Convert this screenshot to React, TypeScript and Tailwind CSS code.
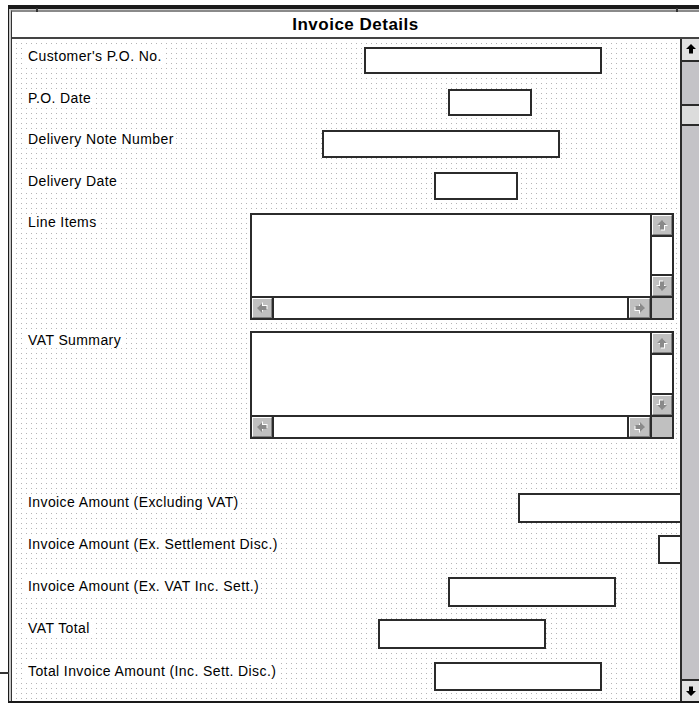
import React from "react";

type Dir = "up" | "down" | "left" | "right";

const turn: Record<Dir, string> = {
  up: "rotate-0",
  down: "rotate-180",
  left: "-rotate-90",
  right: "rotate-90",
};

const Arrow = ({ dir, dark }: { dir: Dir; dark?: boolean }) => (
  <svg width="12" height="12" viewBox="0 0 12 12" className={turn[dir]}>
    {!dark && <polygon points="7,2 12,7 9,7 9,11.5 5,11.5 5,7 2,7" fill="#ffffff" />}
    <polygon points="6,1 11,6 8,6 8,10.5 4,10.5 4,6 1,6" fill={dark ? "#000000" : "#8a8a8a"} />
  </svg>
);

const ScrollBtn = ({ dir, cls }: { dir: Dir; cls: string }) => (
  <div className={`${cls} shrink-0 border-[#2b2b2b]`}>
    <div className="h-full w-full flex items-center justify-center bg-[#c0c0c0] border-t border-l border-t-white border-l-white border-b border-r border-b-[#808080] border-r-[#808080]">
      <Arrow dir={dir} />
    </div>
  </div>
);

const TextBox = ({ cls }: { cls: string }) => (
  <div className={`${cls} shrink-0 border-2 border-[#2b2b2b] bg-white`} />
);

const ListBox = ({ cls }: { cls: string }) => (
  <div className={`${cls} shrink-0 border-2 border-[#2b2b2b] bg-white flex flex-col`}>
    <div className="flex flex-1 min-h-0">
      <div className="flex-1" />
      <div className="w-[22px] border-l-2 border-[#2b2b2b] flex flex-col">
        <ScrollBtn dir="up" cls="h-[22px] border-b-2" />
        <div className="flex-1 bg-white" />
        <ScrollBtn dir="down" cls="h-[22px] border-t-2" />
      </div>
    </div>
    <div className="h-[22px] border-t-2 border-[#2b2b2b] flex">
      <ScrollBtn dir="left" cls="w-[22px] border-r-2" />
      <div className="flex-1 bg-white" />
      <ScrollBtn dir="right" cls="w-[23px] border-l-2" />
      <div className="w-[22px] border-l-2 border-[#2b2b2b] bg-[#c0c0c0]" />
    </div>
  </div>
);

const fields = [
  { label: "Customer's P.O. No.", row: "mt-[8px]", col: "w-[352px]", box: "w-[238px] h-[27px]" },
  { label: "P.O. Date", row: "mt-[15px]", col: "w-[436px]", box: "w-[84px] h-[27px]" },
  { label: "Delivery Note Number", row: "mt-[14px]", col: "w-[310px]", box: "w-[238px] h-[28px]" },
  { label: "Delivery Date", row: "mt-[14px]", col: "w-[422px]", box: "w-[84px] h-[28px]" },
  { label: "Line Items", row: "mt-[13px]", col: "w-[238px]", box: "w-[424px] h-[107px]", list: true },
  { label: "VAT Summary", row: "mt-[11px]", col: "w-[238px]", box: "w-[424px] h-[108px]", list: true },
  { label: "Invoice Amount (Excluding VAT)", row: "mt-[54px]", col: "w-[506px]", box: "w-[200px] h-[30px]" },
  { label: "Invoice Amount (Ex. Settlement Disc.)", row: "mt-[12px]", col: "w-[646px]", box: "w-[100px] h-[29px]" },
  { label: "Invoice Amount (Ex. VAT Inc. Sett.)", row: "mt-[13px]", col: "w-[436px]", box: "w-[168px] h-[30px]" },
  { label: "VAT Total", row: "mt-[12px]", col: "w-[366px]", box: "w-[168px] h-[30px]" },
  { label: "Total Invoice Amount (Inc. Sett. Disc.)", row: "mt-[13px]", col: "w-[422px]", box: "w-[168px] h-[29px]" },
];

export default function App() {
  return (
    <div className="relative w-[699px] h-[704px] overflow-hidden bg-white text-black font-['Liberation_Sans',Arial,sans-serif]">
      {/* frame ticks */}
      <div className="absolute left-[36px] top-[8px] w-[2px] h-[4px] bg-[#333]" />
      <div className="absolute left-[676px] top-[8px] w-[2px] h-[4px] bg-[#333]" />
      <div className="absolute left-0 top-[672px] w-[9px] h-[2px] bg-[#333]" />

      <div className="ml-[8px] mt-[5px] border-t-4 border-l border-b-2 border-[#1a1a1a] pt-[1px] pl-[2px] bg-[#c8c8c8]">
        <div className="border-t-2 border-t-[#8a8a8a] border-l border-l-[#333] flex flex-col">
          <div className="h-[27px] bg-white border-b-2 border-[#444] flex items-center justify-center">
            <span className="text-[17px] font-bold tracking-[0.5px] leading-none">Invoice Details</span>
          </div>

          <div className="flex h-[662px]">
            <div className="relative w-[668px] overflow-hidden bg-[#b4b4b4] bg-[linear-gradient(90deg,#fff_4px,transparent_4px),linear-gradient(#fff_4px,transparent_4px)] bg-[length:5px_5px] flex flex-col">
              {fields.map((f) => (
                <div key={f.label} className={`${f.row} flex items-start shrink-0`}>
                  <div className={`${f.col} shrink-0 pl-[14px] pt-[1px] text-[14px] leading-[16px]`}>
                    <span className="bg-white px-[2px] tracking-[0.4px] whitespace-nowrap">
                      {f.label}
                    </span>
                  </div>
                  {f.list ? <ListBox cls={f.box} /> : <TextBox cls={f.box} />}
                </div>
              ))}
            </div>

            <div className="w-[19px] border-l-2 border-[#2b2b2b] bg-[#c4c3c7] flex flex-col">
              <div className="h-[23px] bg-[#e2e2e2] border-b-2 border-[#2b2b2b] flex justify-center pt-[4px]">
                <Arrow dir="up" dark />
              </div>
              <div className="h-[42px]" />
              <div className="h-[22px] bg-[#dcdcdc] border-y-2 border-[#2b2b2b]" />
              <div className="flex-1" />
              <div className="h-[22px] bg-[#e2e2e2] border-t-2 border-[#2b2b2b] flex justify-center pt-[4px]">
                <Arrow dir="down" dark />
              </div>
            </div>
          </div>
        </div>
      </div>
    </div>
  );
}
